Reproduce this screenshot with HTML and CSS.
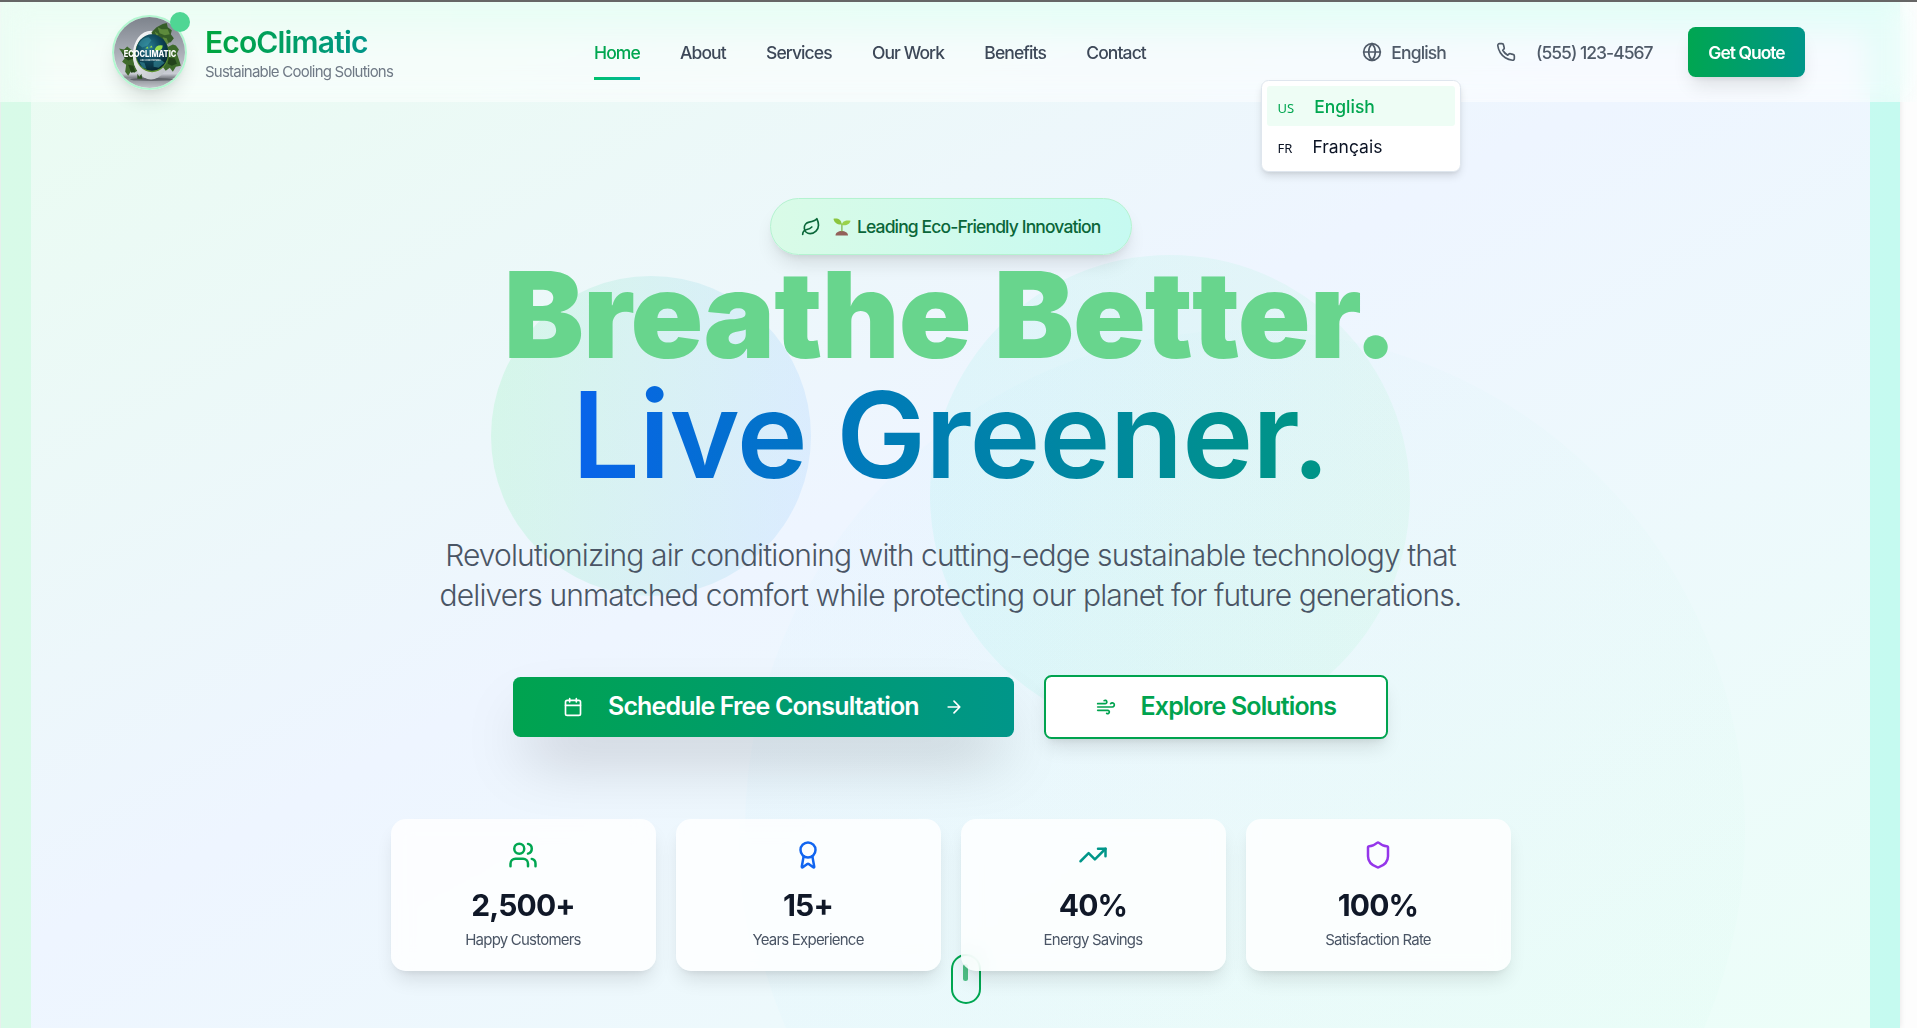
FILE: index.html
```html
<!DOCTYPE html>
<html lang="en">
<head>
<meta charset="utf-8">
<title>EcoClimatic</title>
<link rel="stylesheet" href="styles.css">
</head>
<body>
<div class="page">
  <header class="header">
    <div class="header-inner">
      <div class="brand">
        <div class="logo">
          <svg class="logo-art" viewBox="0 0 70 70">
            <defs>
              <linearGradient id="sky" x1="0" y1="0" x2="0" y2="1"><stop offset="0" stop-color="#7d838c"/><stop offset=".5" stop-color="#a9adb6"/><stop offset=".8" stop-color="#c9ccd4"/><stop offset=".85" stop-color="#85888f"/><stop offset="1" stop-color="#c3c6cc"/></linearGradient>
              <linearGradient id="shell" x1="0" y1="0" x2="1" y2="1"><stop offset="0" stop-color="#ffffff"/><stop offset="1" stop-color="#b5bac0"/></linearGradient>
              <radialGradient id="sea" cx=".4" cy=".35" r=".7"><stop offset="0" stop-color="#2a7d92"/><stop offset=".5" stop-color="#0f4a5e"/><stop offset="1" stop-color="#06232e"/></radialGradient>
            </defs>
            <circle cx="35" cy="35" r="35" fill="url(#sky)"/>
            <ellipse cx="37" cy="61.5" rx="21" ry="1.6" fill="#4f5359" opacity=".7"/>
            <path d="M5 31l5 1 3-3 5 4 4 8-2 6 3 6-3 2-3-2-3 5-3-4 1-7-4-3 3-4z" fill="#3f6b2c"/>
            <path d="M8 34l4 3 5-2 2 6-5 2-4-3zM14 47l5 1 2 6-4 1z" fill="#24461a"/>
            <ellipse cx="36.500" cy="37.500" rx="18" ry="24" fill="url(#shell)"/>
            <path d="M37 15l5-5 6-3 4-1 1 4 4 3-1 4 3 4-3 4-4 1 2 6-5-1-5-7-6-5z" fill="#355d27"/>
            <path d="M43 10l4 2 6 0 2 5-5 1-5-2zM48 20l4 1 2 6-4-2zM40 14l4 3-2 2z" fill="#5d8a3c"/>
            <path d="M52 30l6-3 3 1 3 4-2 4 2 6 2 6-5 1-3 5-3-4-4 3-3-4z" fill="#3d6a2a"/>
            <path d="M54 40l6 1 2 5-5 2-4-2z" fill="#23431a"/>
            <ellipse cx="37.500" cy="36" rx="16.500" ry="18.500" fill="#5d9130"/>
            <ellipse cx="37.500" cy="35" rx="16" ry="18" fill="url(#sea)"/>
            <path d="M24 27q4-7 10-7l3 3-4 5-5 2zM39 44l7-2 4 3-6 5-5-1zM25 44l5 1 2 6-4-1z" fill="#3fa0b0" opacity=".5"/>
            <path d="M40 33q1-6 8-5 0 6-8 5z" fill="#9be04a"/>
            <path d="M31 31l2-2 1 2zM35 30l2-2 1 2z" fill="#9be04a"/>
            <path d="M23 56l2 3 2-3 1 5-5 0z" fill="#2d5420"/>
            <text class="logo-word" x="35.500" y="39.500" text-anchor="middle" textLength="52" lengthAdjust="spacingAndGlyphs">ECOCLIMATIC</text>
            <text class="logo-sub" x="36" y="43.500" text-anchor="middle" textLength="20" lengthAdjust="spacingAndGlyphs">AIR CONDITIONING</text>
          </svg>
          <span class="logo-dot"></span>
        </div>
        <div class="brand-text">
          <div class="brand-name">EcoClimatic</div>
          <div class="brand-tag">Sustainable Cooling Solutions</div>
        </div>
      </div>
      <nav class="nav">
        <a class="nav-link active">Home</a>
        <a class="nav-link">About</a>
        <a class="nav-link">Services</a>
        <a class="nav-link">Our Work</a>
        <a class="nav-link">Benefits</a>
        <a class="nav-link">Contact</a>
      </nav>
      <div class="actions">
        <div class="lang">
          <svg class="icon" viewBox="0 0 24 24"><circle cx="12" cy="12" r="10"/><path d="M12 2a14.500 14.500 0 0 0 0 20 14.500 14.500 0 0 0 0-20"/><path d="M2 12h20"/></svg>
          <span>English</span>
          <div class="menu">
            <div class="menu-item selected"><span class="code">US</span><span>English</span></div>
            <div class="menu-item"><span class="code">FR</span><span>Français</span></div>
          </div>
        </div>
        <div class="phone">
          <svg class="icon" viewBox="0 0 24 24"><path d="M22 16.920v3a2 2 0 0 1-2.180 2 19.790 19.790 0 0 1-8.630-3.070 19.500 19.500 0 0 1-6-6 19.790 19.790 0 0 1-3.070-8.670A2 2 0 0 1 4.110 2h3a2 2 0 0 1 2 1.720 12.840 12.840 0 0 0 .7 2.810 2 2 0 0 1-.45 2.110L8.090 9.910a16 16 0 0 0 6 6l1.270-1.270a2 2 0 0 1 2.110-.45 12.840 12.840 0 0 0 2.810.7A2 2 0 0 1 22 16.920z"/></svg>
          <span>(555) 123-4567</span>
        </div>
        <a class="quote">Get Quote</a>
      </div>
    </div>
  </header>

  <main class="hero">
    <div class="orb orb-large"></div>
    <div class="orb orb-left"></div>
    <div class="orb orb-right"></div>
    <div class="scroll-cue"><span></span></div>

    <div class="badge">
      <svg class="icon" viewBox="0 0 24 24"><path d="M11 20A7 7 0 0 1 9.800 6.100C15.500 5 17 4.480 19 2c1 2 2 4.180 2 8 0 5.500-4.780 10-10 10Z"/><path d="M2 21c0-3 1.850-5.360 5.080-6C9.500 14.520 12 13 13 12"/></svg>
      <svg class="seedling" viewBox="0 0 18 18">
        <path d="M2.500 17.500c0-3 3-4.500 6.200-4.500s6.300 1.500 6.300 4.500z" fill="#93615a"/>
        <path d="M8.300 13.500V5.500h1.200v8z" fill="#7cb342"/>
        <path d="M8.600 6.500C5 7 1 5 .5 .8 5 0 8.600 1.800 8.600 6.500z" fill="#8bc53f"/>
        <path d="M9 7c0-3.500 3.500-5 8.500-4.200C17 6.200 13 8 9 7z" fill="#9ad24a"/>
      </svg>
      <span>Leading Eco-Friendly Innovation</span>
    </div>

    <h1 class="title">
      <span class="title-top">Breathe Bet<span class="unkerned">ter.</span></span>
      <span class="title-bottom">Live Greener.</span>
    </h1>
    <p class="lead">Revolutionizing air conditioning with cutting-edge sustainable technology that<br>delivers unmatched comfort while protecting our planet for future generations.</p>

    <div class="cta">
      <a class="btn primary">
        <svg class="icon" viewBox="0 0 24 24"><path d="M8 2v4M16 2v4"/><rect width="18" height="18" x="3" y="4" rx="2"/><path d="M3 10h18"/></svg>
        <span>Schedule Free Consultation</span>
        <svg class="icon" viewBox="0 0 24 24"><path d="M5 12h14M12 5l7 7-7 7"/></svg>
      </a>
      <a class="btn outline">
        <svg class="icon" viewBox="0 0 24 24"><path d="M12.800 19.600A2 2 0 1 0 14 16H2"/><path d="M17.500 8a2.500 2.500 0 1 1 2 4H2"/><path d="M9.800 4.400A2 2 0 1 1 11 8H2"/></svg>
        <span>Explore Solutions</span>
      </a>
    </div>

    <div class="stats">
      <div class="stat">
        <svg class="icon green" viewBox="0 0 24 24"><path d="M16 21v-2a4 4 0 0 0-4-4H6a4 4 0 0 0-4 4v2"/><circle cx="9" cy="7" r="4"/><path d="M22 21v-2a4 4 0 0 0-3-3.870M16 3.130a4 4 0 0 1 0 7.750"/></svg>
        <div class="num">2,500+</div><div class="label">Happy Customers</div>
      </div>
      <div class="stat">
        <svg class="icon blue" viewBox="0 0 24 24"><path d="m15.477 12.890 1.515 8.526a.5.5 0 0 1-.810.470l-3.580-2.687a1 1 0 0 0-1.197 0l-3.586 2.686a.5.5 0 0 1-.810-.469l1.514-8.526"/><circle cx="12" cy="8" r="6"/></svg>
        <div class="num">15+</div><div class="label">Years Experience</div>
      </div>
      <div class="stat">
        <svg class="icon teal" viewBox="0 0 24 24"><path d="M22 7l-8.500 8.500-5-5L2 17"/><path d="M16 7h6v6"/></svg>
        <div class="num">40%</div><div class="label">Energy Savings</div>
      </div>
      <div class="stat">
        <svg class="icon purple" viewBox="0 0 24 24"><path d="M20 13c0 5-3.500 7.500-7.660 8.950a1 1 0 0 1-.670-.010C7.500 20.500 4 18 4 13V6a1 1 0 0 1 1-1c2 0 4.500-1.200 6.240-2.720a1.170 1.170 0 0 1 1.520 0C14.510 3.810 17 5 19 5a1 1 0 0 1 1 1z"/></svg>
        <div class="num">100%</div><div class="label">Satisfaction Rate</div>
      </div>
    </div>
  </main>
</div>
</body>
</html>
```
FILE: styles.css
```css
* { box-sizing: border-box; }

body {
  margin: 0;
  height: 1028px;
  overflow: hidden;
  background: #fdfdfd;
  border-top: 2px solid #666;
  font-family: "Inter", sans-serif;
  letter-spacing: -0.85px;
  color: #101828;
}

.page {
  position: relative;
  width: 1900px;
  height: 1026px;
  padding: 30px 30px 0;
  border-left: 1px solid #e7efec;
  background: linear-gradient(to right, #d8fae8, #c5faf0);
  box-shadow: 0 0 6px rgba(0, 0, 0, .1);
}

.icon {
  width: 20px;
  height: 20px;
  flex: none;
  fill: none;
  stroke: currentColor;
  stroke-width: 2;
  stroke-linecap: round;
  stroke-linejoin: round;
}

/* Header */
.header {
  position: absolute;
  z-index: 5;
  top: 0;
  left: -1px;
  width: 1917px;
  height: 100px;
  background: rgba(255, 255, 255, .5);
}
.header::before {
  content: "";
  position: absolute;
  inset: 0;
  backdrop-filter: blur(15px);
}
.header-inner {
  position: relative;
  height: 100%;
  margin: 0 112px 0 112.500px;
  display: grid;
  grid-template-columns: 481.500px 1fr auto;
  align-items: center;
}
.brand { display: flex; align-items: center; gap: 18px; }
.logo {
  position: relative;
  width: 75px;
  height: 75px;
  margin-left: -.5px;
  border: 2.500px solid #b2f7d0;
  border-radius: 50%;
  box-shadow: 0 12px 19px -4px rgba(0, 0, 0, .12), 0 5px 8px -5px rgba(0, 0, 0, .1);
}
.logo-art { display: block; width: 100%; height: 100%; }
.logo-word { font: 800 9px "Inter", sans-serif; letter-spacing: 0; fill: #fff; }
.logo-sub { font: 700 2.500px "Inter", sans-serif; letter-spacing: 0; fill: #e8f1ee; }
.logo-dot {
  position: absolute;
  top: -5px;
  right: -5px;
  width: 20px;
  height: 20px;
  border-radius: 50%;
  background: #4fd694;
}
.brand-text { padding-top: 2px; }
.brand-name {
  width: max-content;
  font-size: 30px;
  line-height: 38px;
  font-weight: 600;
  color: transparent;
  background: linear-gradient(to right, #00a63e, #009689);
  background-clip: text;
}
.brand-tag { font-size: 15px; line-height: 22px; color: #6f7985; letter-spacing: -.77px; }

.nav { display: flex; gap: 40.200px; }
.nav-link {
  height: 56px;
  padding-top: 17px;
  font-size: 17.500px;
  line-height: 24px;
  font-weight: 500;
  letter-spacing: -.9px;
  color: #3d4858;
}
.nav-link.active {
  color: #00a650;
  border-bottom: 3px solid;
  border-image: linear-gradient(to right, #00c16a, #00b5a5) 1;
}

.actions { display: flex; align-items: center; font-size: 17.500px; color: #4f5a68; }
.lang { position: relative; display: flex; align-items: center; gap: 9px; font-weight: 500; }
.phone { display: flex; align-items: center; gap: 20px; margin: 0 35.500px 0 50px; font-weight: 500; letter-spacing: -1px; }
.quote {
  width: 117px;
  height: 50px;
  border-radius: 7.500px;
  display: grid;
  place-items: center;
  color: #fff;
  font-weight: 600;
  letter-spacing: -1px;
  background: linear-gradient(to right, #00a651, #009689);
  box-shadow: 0 12px 19px -4px rgba(0, 0, 0, .11), 0 5px 8px -5px rgba(0, 0, 0, .1);
}
.menu {
  position: absolute;
  top: 38px;
  right: -14.500px;
  width: 200px;
  padding: 5px;
  border: 1px solid #dfe6ee;
  border-radius: 7.500px;
  background: #fff;
  color: #0b1324;
  font-weight: 400;
  letter-spacing: 0;
  box-shadow: 0 5px 8px -1px rgba(0, 0, 0, .12), 0 2px 5px -2px rgba(0, 0, 0, .1);
}
.menu-item {
  height: 40px;
  padding-left: 11px;
  border-radius: 3px;
  display: flex;
  align-items: baseline;
  line-height: 41px;
  gap: 20px;
}
.menu-item.selected { background: #eefdf5; color: #00a650; font-weight: 500; }
.code { font: 400 13px/41px "Noto Sans", sans-serif; }

/* Hero */
.hero {
  position: relative;
  height: 996px;
  padding-top: 166px;
  overflow: hidden;
  display: flex;
  flex-direction: column;
  align-items: center;
  background: linear-gradient(to bottom right, #eafcf1, #eef5ff 46%, #ecfef8);
}
.hero > * { flex: none; }
.orb { position: absolute; border-radius: 50%; }
.orb-left {
  left: 460px; top: 244px; width: 320px; height: 320px;
  background: linear-gradient(to right, rgba(122, 241, 168, .2), rgba(142, 197, 255, .2));
}
.orb-right {
  left: 899px; top: 223px; width: 480px; height: 480px;
  background: linear-gradient(to right, rgba(70, 236, 213, .09), rgba(123, 241, 168, .09));
}
.orb-large {
  left: 714px; top: 298px; width: 1000px; height: 1000px;
  background: linear-gradient(to right, rgba(83, 214, 253, .022), rgba(94, 233, 181, .018));
}
.scroll-cue {
  position: absolute;
  left: 920px; top: 922px;
  width: 30px; height: 50px;
  border: 2px solid #00a651;
  border-radius: 15px;
  display: flex;
  justify-content: center;
  padding-top: 8px;
}
.scroll-cue span { width: 5px; height: 17px; margin-left: -1px; border-radius: 3px; background: #4dbf85; }

.badge {
  position: relative;
  width: 362px;
  height: 57px;
  padding-left: 30px;
  display: flex;
  align-items: center;
  border: 1px solid #b4f3d0;
  border-radius: 29px;
  background: linear-gradient(to right, #d9fbe7, #c6faf1);
  color: #0a6639;
  font-size: 17.500px;
  font-weight: 500;
  letter-spacing: -.87px;
  box-shadow: 0 12px 19px -4px rgba(0, 0, 0, .11), 0 5px 8px -5px rgba(0, 0, 0, .1);
}
.seedling { width: 18px; height: 18px; margin: 0 6px 0 12.500px; }

.title {
  position: relative;
  margin: 0;
  font-size: 120px;
  line-height: 120px;
  display: flex;
  flex-direction: column;
  align-items: center;
}
.title-top {
  font-weight: 900;
  letter-spacing: -.9px;
  color: #68d58d;
  font-variant-ligatures: none;
}
.unkerned { margin-left: .01px; letter-spacing: -.89px; }
.title-bottom {
  font-weight: 600;
  color: transparent;
  background: linear-gradient(to right, #0863eb, #007bb8 40%, #009488 95%);
  background-clip: text;
}
.lead {
  position: relative;
  margin: 40px 0 60px;
  font-size: 30px;
  line-height: 40px;
  font-weight: 300;
  letter-spacing: -.868px;
  text-align: center;
  color: #4a5565;
  white-space: nowrap;
}

.cta { position: relative; display: flex; align-items: center; gap: 30px; }
.btn {
  display: flex;
  align-items: center;
  gap: 25px;
  height: 60px;
  padding: 0 50px;
  border-radius: 7.500px;
  font-size: 25px;
  font-weight: 600;
  white-space: nowrap;
}
.btn span { padding-bottom: 2px; }
.primary {
  width: 501px;
  color: #fff;
  background: linear-gradient(to right, #00a34f, #009689);
  box-shadow: 0 31px 62px -15px rgba(0, 0, 0, .25);
}
.outline {
  width: 344px;
  height: 64px;
  gap: 24.500px;
  color: #00a34f;
  background: #fff;
  border: 2px solid;
  box-shadow: 0 12px 19px -4px rgba(0, 0, 0, .11), 0 5px 8px -5px rgba(0, 0, 0, .1);
}

.stats {
  width: 1120px;
  margin-top: 80px;
  display: grid;
  grid-template-columns: repeat(4, 1fr);
  gap: 20px;
}
.stat {
  height: 152px;
  padding-top: 21px;
  border-radius: 15px;
  display: flex;
  flex-direction: column;
  align-items: center;
  background: rgba(255, 255, 255, .8);
  backdrop-filter: blur(10px);
  box-shadow: 0 12px 19px -4px rgba(0, 0, 0, .11), 0 5px 8px -5px rgba(0, 0, 0, .1);
}
.stat .icon { width: 30px; height: 30px; }
.green { color: #00a651; }
.blue { color: #1165f0; }
.teal { color: #009689; }
.purple { color: #9536ea; }
.num { margin-top: 15px; font-size: 30px; line-height: 40px; font-weight: 700; }
.label { margin-top: 5px; font-size: 15px; line-height: 20px; letter-spacing: -.78px; color: #4a5565; }
```
